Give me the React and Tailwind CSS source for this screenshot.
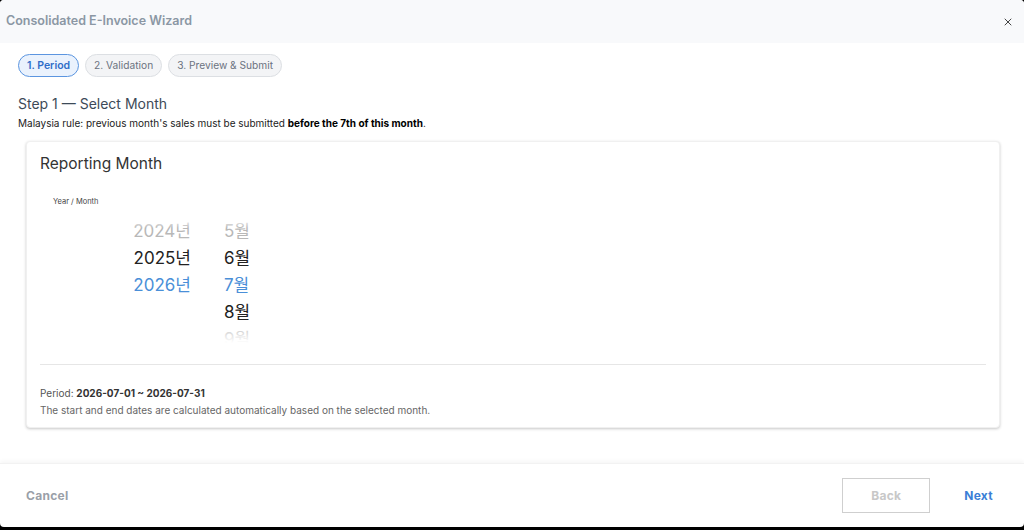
import { X } from 'lucide-react';

const STEPS = ['1. Period', '2. Validation', '3. Preview & Submit'];

const YEARS = [
  { label: '2024년', cls: 'text-[#b8b8b8]' },
  { label: '2025년', cls: 'text-[#222]' },
  { label: '2026년', cls: 'text-[#4a8fd8]' },
  { label: '', cls: '' },
  { label: '', cls: '' },
];
const MONTHS = [
  { label: '5월', cls: 'text-[#b8b8b8]' },
  { label: '6월', cls: 'text-[#222]' },
  { label: '7월', cls: 'text-[#4a8fd8]' },
  { label: '8월', cls: 'text-[#222]' },
  { label: '9월', cls: 'text-[#c8c8c8]' },
];

function Column({ items, width, align }) {
  return (
    <div className={`flex flex-col ${width} ${align}`}>
      {items.map((it, i) => (
        <div key={i} className={`h-[27px] leading-[27px] ${it.cls}`}>{it.label}</div>
      ))}
    </div>
  );
}

export default function App() {
  return (
    <div className="h-[530px] bg-black font-['Inter',sans-serif]">
      <div className="h-[527px] bg-white rounded-[4px] overflow-hidden flex flex-col">
        {/* Header */}
        <div className="h-[43px] shrink-0 bg-[#f8f9fb] flex items-center justify-between pl-[6px] pr-[10px]">
          <h1 className="text-[12.5px] font-semibold text-[#8b97a4]">Consolidated E-Invoice Wizard</h1>
          <X className="w-[12px] h-[12px] text-[#444]" strokeWidth={2} />
        </div>

        {/* Body */}
        <div className="flex-1 pl-[18px] pr-[24px] pt-[11px]">
          <div className="flex gap-[6px]">
            {STEPS.map((s, i) => (
              <span key={s}
                className={`h-[23px] px-[8px] flex items-center rounded-full border
                  ${i === 0
                    ? 'text-[10.5px] border-[#5b95e0] bg-[#eaf2fd] text-[#2f6dc8] font-semibold'
                    : 'text-[10.2px] border-[#dcdfe3] bg-[#f3f4f6] text-[#6b7280]'}`}>
                {s}
              </span>
            ))}
          </div>

          <h2 className="mt-[18px] text-[14px] text-[#3d4a58] leading-[18px]">Step 1 — Select Month</h2>
          <p className="mt-[3px] text-[10px] text-[#222] leading-[14px]">
            Malaysia rule: previous month's sales must be submitted <b className="text-black">before the 7th of this month</b>.
          </p>

          {/* Reporting month card */}
          <div className="mt-[11px] ml-[8px] bg-white rounded-[4px] border border-[#f0f0f0] shadow-[0_1px_3px_rgba(0,0,0,0.22)] px-[13px] pt-[11px] pb-[10px]">
            <h3 className="text-[15.5px] text-[#333] leading-[22px]">Reporting Month</h3>
            <div className="mt-[22px] pl-[13px] text-[7.5px] text-[#444] leading-[10px]">Year / Month</div>

            {/* wheel picker: rows fade out at the top and bottom edges */}
            <div className="relative mt-[11px] h-[125px] overflow-hidden font-['Inter','Noto_Sans_CJK_KR',sans-serif] text-[17px]">
              <div className="flex">
                <Column items={YEARS} width="w-[151px]" align="text-right" />
                <Column items={MONTHS} width="w-[73px] ml-[33px]" align="text-left" />
              </div>
              <div className="absolute inset-x-0 bottom-0 h-[16px] bg-gradient-to-b from-white/0 to-white" />
              <div className="absolute inset-x-0 top-0 h-[10px] bg-gradient-to-t from-white/0 to-white" />
            </div>

            <div className="mt-[21px] border-t border-[#e6e6e6]" />

            <p className="mt-[21px] text-[10px] text-[#555] leading-[14px]">
              Period: <b className="text-[#333]">2026-07-01 ~ 2026-07-31</b>
            </p>
            <p className="mt-[3px] text-[10px] text-[#666] leading-[14px]">
              The start and end dates are calculated automatically based on the selected month.
            </p>
          </div>
        </div>

        {/* Footer */}
        <div className="h-[64px] shrink-0 flex items-center justify-between pl-[26px] pr-[17px] shadow-[0_-2px_4px_rgba(0,0,0,0.04)] border-t border-[#f2f2f2]">
          <button className="text-[12px] font-bold text-[#9aa0a8] tracking-[0.3px]">Cancel</button>
          <div className="flex items-center gap-[20px]">
            <button className="w-[88px] h-[35px] border border-[#cfcfcf] text-[12px] font-bold text-[#c8c8c8] tracking-[0.3px]">Back</button>
            <button className="px-[14px] h-[35px] text-[12px] font-bold text-[#3b7fd6] tracking-[0.3px]">Next</button>
          </div>
        </div>
      </div>
    </div>
  );
}
